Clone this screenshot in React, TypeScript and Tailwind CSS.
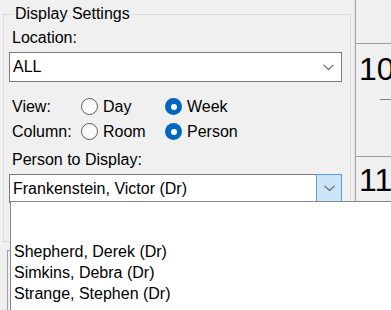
import React from "react";

function Chevron() {
  return (
    <svg width="11" height="7" viewBox="0 0 11 7" className="block">
      <polyline points="0.5,0.8 5.5,5.5 10.5,0.8" fill="none" stroke="#606060" strokeWidth="1.1" />
    </svg>
  );
}

function Radio({ checked, label }: { checked?: boolean; label: string }) {
  return (
    <div className="flex items-center w-[84px]">
      {checked ? (
        <span className="w-[17px] h-[17px] rounded-full bg-[#0067c0] flex items-center justify-center">
          <span className="w-[6px] h-[6px] rounded-full bg-white"></span>
        </span>
      ) : (
        <span className="w-[17px] h-[17px] rounded-full border border-[#5c5c5c] bg-[#fbfbfb]"></span>
      )}
      <span className="ml-[5px]">{label}</span>
    </div>
  );
}

export default function App() {
  return (
    <div className="relative w-[391px] h-[310px] overflow-hidden bg-[#f0f0f0] text-black text-[16px] font-['Liberation_Sans',Arial,sans-serif] flex">
      {/* left settings panel */}
      <div className="w-[355px] shrink-0 border-r border-[#e3e3e3]">
        <fieldset className="ml-[3px] mt-[4px] w-[348px] h-[238px] border border-[#dcdcdc]">
          <legend className="ml-[9px] px-[2px] leading-[20px]">Display Settings</legend>

          <div className="pl-[8px] mt-[4px] leading-[20px]">Location:</div>
          <div className="ml-[5px] mt-[4px] w-[333px] h-[30px] border border-[#7a7a7a] bg-white flex items-center">
            <span className="flex-1 pl-[3px] leading-[20px]">ALL</span>
            <span className="w-[26px] h-full flex items-center justify-center">
              <Chevron />
            </span>
          </div>

          <div className="mt-[12px] pl-[8px] flex items-center h-[25px]">
            <span className="w-[69px]">View:</span>
            <Radio label="Day" />
            <Radio checked label="Week" />
          </div>
          <div className="pl-[8px] flex items-center h-[25px]">
            <span className="w-[69px]">Column:</span>
            <Radio label="Room" />
            <Radio checked label="Person" />
          </div>

          <div className="pl-[8px] mt-[6px] leading-[20px]">Person to Display:</div>
          <div className="ml-[5px] mt-[4px] w-[333px] h-[29px] flex">
            <div className="flex-1 border-y border-l border-[#7a7a7a] bg-white flex items-center">
              <span className="pl-[3px] leading-[20px]">Frankenstein, Victor (Dr)</span>
            </div>
            <div className="w-[26px] border border-[#569de5] bg-[#cce4f7] flex items-center justify-center">
              <Chevron />
            </div>
          </div>
        </fieldset>
        <div className="ml-[7px] mt-[8px] h-[60px] border-l border-t border-[#a0a0a0]"></div>
      </div>

      {/* right day column */}
      <div className="flex-1 border-l border-[#a0a0a0] flex flex-col">
        <div className="h-[44px] shrink-0 border-b border-[#a0a0a0]"></div>
        <div className="h-[113px] shrink-0 border-b border-[#a0a0a0] pt-[9px] pl-[3px]">
          <div className="text-[32px] leading-[32px]">10</div>
          <div className="ml-[21px] mt-[14px] h-px w-[12px] bg-[#808080]"></div>
        </div>
        <div className="pt-[7px] pl-[3px]">
          <div className="text-[32px] leading-[32px]">11</div>
        </div>
      </div>

      {/* open dropdown list */}
      <div className="absolute left-[10px] top-[201px] right-[-10px] bottom-[-10px] border border-[#828790] bg-white pt-[39px] pl-[3px]">
        {["Shepherd, Derek (Dr)", "Simkins, Debra (Dr)", "Strange, Stephen (Dr)"].map((name) => (
          <div key={name} className="leading-[21px]">
            {name}
          </div>
        ))}
      </div>
    </div>
  );
}
